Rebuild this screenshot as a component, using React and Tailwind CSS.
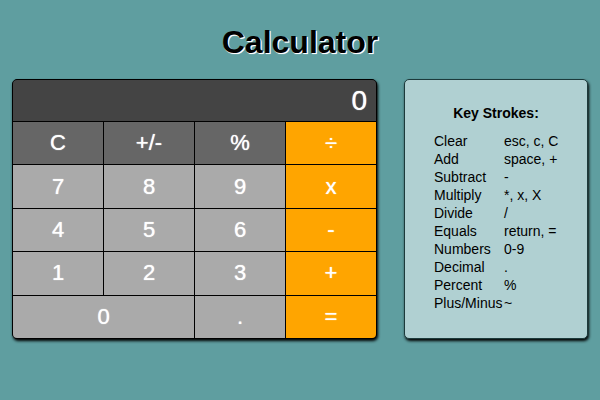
import { useState } from "react";

const keys = [
  { label: "C", name: "Clear", kind: "fn" },
  { label: "+/-", name: "Plus/Minus", kind: "fn" },
  { label: "%", name: "Percent", kind: "fn" },
  { label: "÷", name: "Divide", kind: "op" },
  { label: "7", kind: "num" },
  { label: "8", kind: "num" },
  { label: "9", kind: "num" },
  { label: "x", name: "Multiply", kind: "op" },
  { label: "4", kind: "num" },
  { label: "5", kind: "num" },
  { label: "6", kind: "num" },
  { label: "-", name: "Subtract", kind: "op" },
  { label: "1", kind: "num" },
  { label: "2", kind: "num" },
  { label: "3", kind: "num" },
  { label: "+", name: "Add", kind: "op" },
  { label: "0", kind: "num", wide: true },
  { label: ".", name: "Decimal", kind: "num" },
  { label: "=", name: "Equals", kind: "op" },
];

const kindStyles = {
  fn: "bg-[#666666]",
  num: "bg-[#aaaaaa]",
  op: "bg-[#ffa500]",
};

const strokes = [
  ["Clear", "esc, c, C"],
  ["Add", "space, +"],
  ["Subtract", "-"],
  ["Multiply", "*, x, X"],
  ["Divide", "/"],
  ["Equals", "return, ="],
  ["Numbers", "0-9"],
  ["Decimal", "."],
  ["Percent", "%"],
  ["Plus/Minus", "~"],
];

function Key({ label, name, kind, wide, onPress }) {
  return (
    <button
      type="button"
      aria-label={name}
      onClick={() => onPress(label)}
      className={`${kindStyles[kind]} ${wide ? "col-span-2" : ""} text-[22px] leading-6 text-white [text-shadow:0_0_1px_white] active:brightness-90`}
    >
      {label}
    </button>
  );
}

function Calculator() {
  const [display, setDisplay] = useState("0");

  const press = (label) => {
    if (label === "C") setDisplay("0");
    else if (/^\d$/.test(label)) setDisplay((d) => (d === "0" ? label : d + label));
    else if (label === ".") setDisplay((d) => (d.includes(".") ? d : d + "."));
  };

  return (
    <section className="grid h-[260px] min-w-0 flex-1 grid-cols-4 grid-rows-[41px_repeat(5,1fr)] gap-px overflow-hidden rounded-[5px] border border-black bg-black shadow-[1px_2px_3px_black]">
      <output className="col-span-4 bg-[#444444] pr-[9px] text-right text-[28px] leading-[42px] text-white [text-shadow:0_0_1px_white]">
        {display}
      </output>
      {keys.map((key) => (
        <Key key={key.label} {...key} onPress={press} />
      ))}
    </section>
  );
}

function KeyStrokes() {
  return (
    <aside className="w-[184px] shrink-0 rounded-[5px] border border-[#1c3a3b] bg-[#b0d0d2] pt-6 text-sm text-black shadow-[1px_2px_3px_black]">
      <h2 className="text-center text-sm leading-[18px] font-bold">Key Strokes:</h2>
      <table className="mt-2.5 ml-[29px] text-left leading-[18px]">
        <tbody>
          {strokes.map(([action, combo]) => (
            <tr key={action}>
              <th scope="row" className="w-[70px] p-0 font-normal">
                {action}
              </th>
              <td className="p-0 whitespace-nowrap">{combo}</td>
            </tr>
          ))}
        </tbody>
      </table>
    </aside>
  );
}

export default function App() {
  return (
    <main className="min-h-screen bg-[#5f9ea0] px-3 pt-6 font-['Liberation_Sans',Arial,sans-serif]">
      <h1 className="text-center text-[32px] leading-9 font-bold text-black [text-shadow:1px_1px_1px_white,1px_1px_0_white]">
        Calculator
      </h1>
      <div className="mt-[19px] flex gap-[27px]">
        <Calculator />
        <KeyStrokes />
      </div>
    </main>
  );
}
